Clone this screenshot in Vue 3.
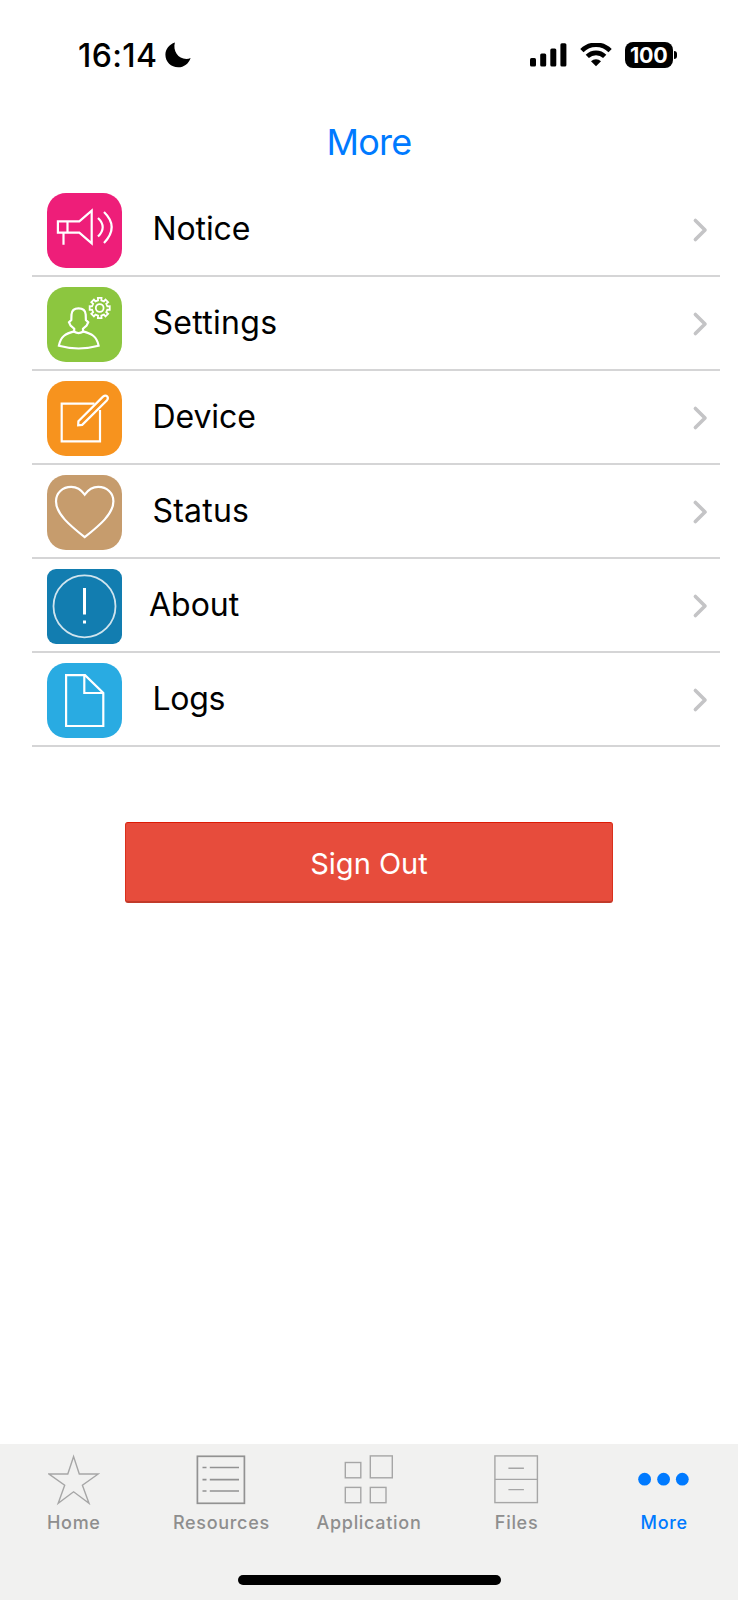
<script setup>
import { ref } from 'vue'

//menu rows, each one has its own tile color
const items = ref([
    { id: 'notice', label: 'Notice' },
    { id: 'settings', label: 'Settings' },
    { id: 'device', label: 'Device' },
    { id: 'status', label: 'Status' },
    { id: 'about', label: 'About' },
    { id: 'logs', label: 'Logs' },
])

const tabs = ref([
    { id: 'home', label: 'Home' },
    { id: 'resources', label: 'Resources' },
    { id: 'application', label: 'Application' },
    { id: 'files', label: 'Files' },
    { id: 'more', label: 'More' },
])

const activeTab = ref('more')

//outline of the small gear: four points per tooth
function gearPoints(cx, cy, teeth, outer, inner) {
    const points = []
    const step = (Math.PI * 2) / teeth
    for (let i = 0; i < teeth; i++) {
        const a = i * step - Math.PI / 2
        const corners = [[-0.27, inner], [-0.23, outer], [0.23, outer], [0.27, inner]]
        corners.forEach(([k, r]) => {
            const t = a + k * step
            points.push((cx + r * Math.cos(t)).toFixed(2) + ',' + (cy + r * Math.sin(t)).toFixed(2))
        })
    }
    return points.join(' ')
}

const gear = gearPoints(52.7, 21, 8, 10.2, 7.8)
</script>

<template>
    <div class="screen">
        <!--status bar-->
        <header class="topbar">
            <div class="clock">
                <span class="time">16:14</span>
                <svg class="moon" width="26" height="26" viewBox="0 0 26 26">
                    <path d="M9.9 .4C7.6 8.4 13 16.9 21.4 16.9 23 16.9 24.3 16.5 25.6 16 23.8 21.6 19 25.3 13.2 25.3 6 25.3 .4 19.9 .4 12.8 .4 7.1 4.2 2.2 9.9 .4Z" />
                </svg>
            </div>
            <div class="signals">
                <svg width="37" height="24" viewBox="0 0 37 24">
                    <rect x="0" y="15" width="6" height="8.5" rx="1.5" />
                    <rect x="10.2" y="10.5" width="6" height="13" rx="1.5" />
                    <rect x="20.3" y="5.5" width="6" height="18" rx="1.5" />
                    <rect x="30.4" y=".3" width="6" height="23.2" rx="1.5" />
                </svg>
                <svg class="wifi" width="32" height="24" viewBox="0 0 32 24">
                    <path d="M1.9 7.6A20 20 0 0 1 30.1 7.6" class="wave" />
                    <path d="M7.3 13.4A12.4 12.4 0 0 1 24.7 13.4" class="wave" />
                    <path d="M11 18.2A7.2 7.2 0 0 1 21 18.2L16 23.3Z" />
                </svg>
                <div class="battery"><b>100</b></div>
                <i class="nub"></i>
            </div>
        </header>

        <h1 class="title">More</h1>

        <!--menu list-->
        <ul class="list">
            <li v-for="item in items" :key="item.id" class="row" :class="item.id">
                <svg class="tile" width="75" height="75" viewBox="0 0 75 75">
                    <g v-if="item.id === 'notice'">
                        <path d="M20.5 28.3H10.9V39.7H20.5ZM20.5 28.3H32.3L44.7 17.7V50.3L32.3 39.7H20.5M16.5 39.7V51.8" />
                        <path d="M51 25Q60.4 34 51 43.6M57 19Q72.4 34 57 49.9" />
                    </g>
                    <g v-else-if="item.id === 'settings'">
                        <path d="M31.5 21.4C27.5 21.4 24.8 23.5 24.5 27.5L24.3 33 22 35.2 23.6 38.6 27.2 41.8V44.8Q31.5 47.4 36 44.8V41.8L39.6 38.6 41.2 35.2 38.9 33 38.7 27.5C38.4 23.5 35.5 21.4 31.5 21.4Z" />
                        <path d="M27.2 44.4C19 46.6 13.5 49 11.9 58.8Q31.5 64.2 51.6 58.8C50 49 44 46.6 36 44.4" />
                        <polygon :points="gear" class="fine" />
                        <circle cx="52.7" cy="21" r="3.9" class="fine" />
                    </g>
                    <g v-else-if="item.id === 'device'">
                        <path d="M47.5 22.7H14.7V60.4H53V29" />
                        <path d="M31.2 44.2L31.4 40.2 56 15.6Q58.5 13.7 60.1 15.3 61.7 17 60 19.2L35.2 43.9Z" />
                    </g>
                    <g v-else-if="item.id === 'status'">
                        <path d="M37.7 19.7C34 14.5 29.5 11.9 24.2 11.9 15.5 11.9 9 18 9 26.2 9 39 23 50.5 37.7 62.2 52.4 50.5 66.4 39 66.4 26.2 66.4 18 59.9 11.9 51.2 11.9 45.9 11.9 41.4 14.5 37.7 19.7Z" />
                    </g>
                    <g v-else-if="item.id === 'about'">
                        <circle cx="37.5" cy="37.3" r="31" class="ring" />
                        <path d="M37.5 19V45.5M37.5 51.6V54.6" class="mark" />
                    </g>
                    <g v-else>
                        <path d="M38 12.2H19.1V63H56.3V30Z" />
                        <path d="M37.3 12.2V30H56.3" />
                    </g>
                </svg>
                <span class="label">{{ item.label }}</span>
                <svg class="chevron" width="16" height="26" viewBox="0 0 16 26">
                    <path d="M3.4 3.4L13 13 3.4 22.6" />
                </svg>
            </li>
        </ul>

        <button class="signout">Sign Out</button>

        <!--bottom tabs-->
        <footer class="bar">
            <nav class="tabs">
                <a v-for="tab in tabs" :key="tab.id" class="tab" :class="{ active: tab.id === activeTab }">
                    <svg width="52" height="52" viewBox="0 0 52 52">
                        <path v-if="tab.id === 'home'" d="M25.6 2.6L31.3 20H50.2L34.4 31.3 41 49.3 25.6 37.8 10.2 49.3 16.7 31.3 1 20H19.8Z" />
                        <g v-else-if="tab.id === 'resources'" class="dark">
                            <rect x="2.4" y="2.3" width="47" height="47" />
                            <path d="M7.5 13.5H11.5M14.8 13.5H44M7.5 25.7H11.5M14.8 25.7H44M7.5 37H11.5M14.8 37H44" />
                        </g>
                        <g v-else-if="tab.id === 'application'">
                            <rect x="2.3" y="8.5" width="15.5" height="15.3" />
                            <rect x="27.3" y="1.9" width="22" height="21.9" />
                            <rect x="2.3" y="33.4" width="15.5" height="15.3" />
                            <rect x="27.3" y="33.4" width="15.7" height="15.3" />
                        </g>
                        <g v-else-if="tab.id === 'files'">
                            <rect x="3.9" y="1.9" width="42.5" height="46.7" />
                            <path d="M3.9 25.4H46.4M17.4 14.3H32.9M17.4 35.6H32.9" />
                        </g>
                        <g v-else class="dots">
                            <circle cx="6.6" cy="25.2" r="6.4" />
                            <circle cx="25.6" cy="25.2" r="6.4" />
                            <circle cx="44.3" cy="25.2" r="6.4" />
                        </g>
                    </svg>
                    <span>{{ tab.label }}</span>
                </a>
            </nav>
            <div class="indicator"></div>
        </footer>
    </div>
</template>

<style>
body {
    margin: 0;
    background: #fff;
}
</style>

<style scoped>
.screen {
    display: flex;
    flex-direction: column;
    width: 738px;
    height: 1600px;
    overflow: hidden;
    background: #fff;
    color: #000;
    font-family: Inter, "Liberation Sans", sans-serif;
}

.topbar {
    display: flex;
    justify-content: space-between;
    align-items: center;
    box-sizing: border-box;
    height: 110px;
    padding: 0 61.5px 0 78px;
}

.clock,
.signals {
    display: flex;
    align-items: center;
}

.time {
    width: 87px;
    font-size: 32px;
    font-weight: 550;
    letter-spacing: 0.4px;
    white-space: nowrap;
}

.wifi {
    margin-left: 13px;
}

.wave {
    fill: none;
    stroke: #000;
    stroke-width: 4.6;
}

.battery {
    width: 47.5px;
    height: 26px;
    margin-left: 13px;
    border-radius: 8px;
    background: #000;
    color: #fff;
    font-size: 21.5px;
    line-height: 26px;
    text-align: center;
    letter-spacing: -0.2px;
}

.nub {
    width: 2.5px;
    height: 8px;
    margin-left: 1.5px;
    border-radius: 0 4px 4px 0;
    background: #000;
}

.title {
    height: 73px;
    margin: 0;
    color: #007aff;
    font-size: 36px;
    font-weight: 400;
    line-height: 65px;
    text-align: center;
    letter-spacing: -0.8px;
}

.list {
    margin: 0 18px 0 32px;
    padding: 0;
    list-style: none;
}

.row {
    display: flex;
    align-items: center;
    box-sizing: border-box;
    height: 94px;
    padding: 0 12px 0 15px;
    border-bottom: 2px solid #d5d5d6;
}

.tile {
    margin-top: 2px;
    border-radius: 19px;
    fill: none;
    stroke: #fff;
    stroke-width: 2.2;
}

.notice .tile { background: #ee1e79; }
.settings .tile { background: #8cc63f; }
.device .tile { background: #f7931e; }
.status .tile { background: #c69c6d; }
.about .tile { background: #127db0; border-radius: 9px; }
.logs .tile { background: #29abe2; }

.fine {
    stroke-width: 1.8;
}

.ring {
    stroke: #cfe4ee;
    stroke-width: 1.8;
}

.mark {
    stroke-width: 3;
}

.label {
    flex: 1;
    margin-left: 30.5px;
    font-size: 32px;
    line-height: 40px;
    letter-spacing: -0.1px;
}

.settings .label {
    letter-spacing: 0.3px;
}

.status .label {
    letter-spacing: 0.2px;
}

.about .label {
    margin-left: 27px;
    letter-spacing: 0;
}

.logs .label {
    letter-spacing: -0.3px;
}

.chevron {
    margin-top: 1px;
    fill: none;
    stroke: #c4c4c6;
    stroke-width: 3.6;
    stroke-linecap: round;
    stroke-linejoin: round;
}

.signout {
    align-self: center;
    box-sizing: border-box;
    width: 488px;
    height: 81px;
    margin-top: 75px;
    padding: 2px 0 0;
    border: 1px solid #d9301c;
    border-top-color: #dd1a05;
    border-bottom: 2px solid #c13a2a;
    border-radius: 3px;
    background: #e74c3c;
    color: #fff;
    font-family: inherit;
    font-size: 29px;
    letter-spacing: 0;
}

.bar {
    height: 156px;
    margin-top: auto;
    background: #f1f1f0;
}

.tabs {
    display: flex;
    height: 131px;
}

.tab {
    display: flex;
    flex: 1;
    flex-direction: column;
    align-items: center;
    padding-top: 10px;
    color: #8e8e8e;
    font-size: 18px;
    font-weight: 500;
    line-height: 24px;
    letter-spacing: 0.7px;
}

.tab svg {
    fill: none;
    stroke: #a6a6a6;
    stroke-width: 1.4;
}

.tab .dark {
    stroke: #929292;
    stroke-width: 1.7;
}

.tab span {
    margin-top: 5px;
}

.tab.active {
    color: #007aff;
}

.tab .dots {
    fill: #007aff;
    stroke: none;
}

.indicator {
    width: 263px;
    height: 9.5px;
    margin: 0 auto;
    border-radius: 5px;
    background: #000;
}
</style>
